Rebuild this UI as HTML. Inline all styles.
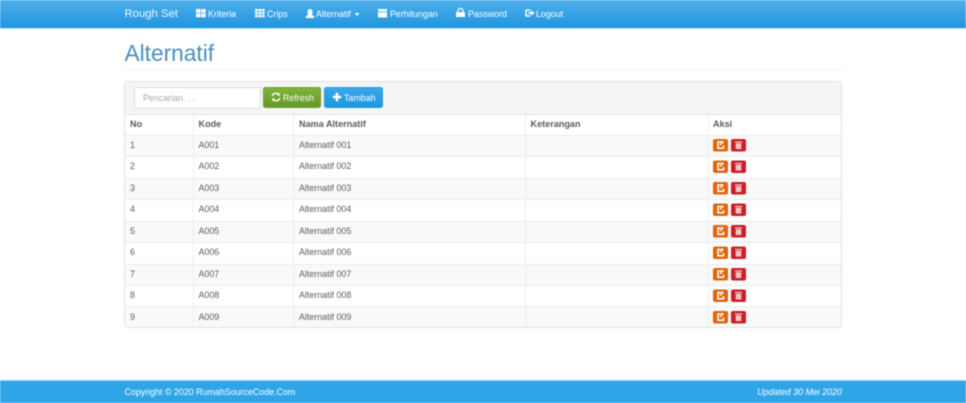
<!DOCTYPE html>
<html><head><meta charset="utf-8"><title>Alternatif</title>
<style>
html,body{margin:0;padding:0;background:#fff}
#w{position:relative;width:966px;height:403px;overflow:hidden;font-family:"Liberation Sans",sans-serif;color:#5c5c5c;filter:blur(.45px)}
#w div,#w span.a,#w svg.a{position:absolute}
.t{font-size:8.9px;line-height:12px;white-space:nowrap}
.n{color:#fff;top:8px}
.b{font-weight:bold;color:#5c5c5c;font-size:9.1px}
.btn{border-radius:2.5px}
</style></head><body><div id="w">
<div style="left:0;top:0;width:966px;height:28px;background:linear-gradient(#4fb0eb,#1f95e0);border-bottom:1px solid #c5e2f5;box-sizing:content-box"></div>
<div class="t" style="left:124.5px;top:7px;color:#eef7fd;font-size:11.3px;line-height:14px">Rough Set</div>

<svg class="a" style="left:196px;top:9px" width="10" height="9" fill="#fff"><rect width="4.5" height="3.8"/><rect x="5.2" width="4.5" height="3.8"/><rect y="4.5" width="4.5" height="3.8"/><rect x="5.2" y="4.5" width="4.5" height="3.8"/></svg>
<div class="t n" style="left:208px">Kriteria</div>
<svg class="a" style="left:255px;top:9px" width="10" height="9" fill="#fff"><rect width="2.8" height="2.3"/><rect x="3.4" width="2.8" height="2.3"/><rect x="6.8" width="2.8" height="2.3"/><rect y="3" width="2.8" height="2.3"/><rect x="3.4" y="3" width="2.8" height="2.3"/><rect x="6.8" y="3" width="2.8" height="2.3"/><rect y="6" width="2.8" height="2.3"/><rect x="3.4" y="6" width="2.8" height="2.3"/><rect x="6.8" y="6" width="2.8" height="2.3"/></svg>
<div class="t n" style="left:267px">Crips</div>
<svg class="a" style="left:305px;top:9px" width="10" height="9" fill="#fff"><ellipse cx="5" cy="3" rx="2.6" ry="3"/><path d="M0.5 9 Q1 6 4 5.5 H6 Q9 6 9.5 9 Z"/></svg>
<div class="t n" style="left:316px">Alternatif</div>
<svg class="a" style="left:354px;top:13px" width="6" height="3" fill="#fff"><path d="M0.5 0 H5.5 L3 3 Z"/></svg>
<svg class="a" style="left:378px;top:9px" width="9" height="9" fill="#fff"><path d="M0 0 H9 V2.5 H0 Z M0 3.3 H9 V8.5 H0 Z"/></svg>
<div class="t n" style="left:390px">Perhitungan</div>
<svg class="a" style="left:456px;top:8px" width="9" height="10"><path d="M2 4.5 V3 A2.5 2.5 0 0 1 7 3 V4.5" fill="none" stroke="#fff" stroke-width="1.2"/><rect y="4.2" width="9" height="4.8" fill="#fff"/></svg>
<div class="t n" style="left:468px">Password</div>
<svg class="a" style="left:525px;top:9px" width="10" height="9"><path d="M5 1 H2 Q1 1 1 2 V6 Q1 7 2 7 H5" fill="none" stroke="#fff" stroke-width="1.5"/><path d="M3.5 3 H6 V1.3 L9.6 4 L6 6.7 V5 H3.5 Z" fill="#fff"/></svg>
<div class="t n" style="left:536px">Logout</div>

<div style="left:124.5px;top:40px;font-size:22.7px;line-height:26px;color:#4a8fbd;white-space:nowrap">Alternatif</div>
<div style="left:124px;top:69px;width:718px;height:1px;background:#f0f0f0"></div>

<div style="left:124px;top:81px;width:718px;height:247px;border:1px solid #e2e2e2;border-radius:3px;box-sizing:border-box;background:#fff"></div>
<div style="left:125px;top:82px;width:716px;height:33px;background:#f5f5f5;border-bottom:1px solid #e6e6e6;box-sizing:border-box;border-radius:3px 3px 0 0"></div>
<div style="left:134px;top:87px;width:127px;height:22px;background:#fff;border:1px solid #ddd;border-radius:3px;box-sizing:border-box"></div>
<div class="t" style="left:143px;top:92px;color:#aaa">Pencarian. . .</div>
<div class="btn" style="left:263px;top:87px;width:58px;height:21px;background:linear-gradient(#80b33c,#659a28);border:1px solid #6ea22f;box-sizing:border-box"></div>
<svg class="a" style="left:271px;top:92px" width="10" height="10" fill="none" stroke="#fff" stroke-width="1.4"><path d="M1.2 4.2 A3.8 3.8 0 0 1 8 2.8"/><path d="M8.8 5.8 A3.8 3.8 0 0 1 2 7.2"/><path d="M8.8 .6 V3.6 H5.8 Z M1.2 9.4 V6.4 H4.2 Z" fill="#fff" stroke="none"/></svg>
<div class="t" style="left:283px;top:92px;color:#fff">Refresh</div>
<div class="btn" style="left:324px;top:87px;width:59px;height:21px;background:linear-gradient(#3aa8ea,#1f95e0);border:1px solid #2a9de3;box-sizing:border-box"></div>
<svg class="a" style="left:332px;top:92px" width="10" height="10" fill="#fff"><path d="M3.7 .8 H6.2 V3.7 H9.2 V6.2 H6.2 V9.2 H3.7 V6.2 H.8 V3.7 H3.7 Z"/></svg>
<div class="t" style="left:344px;top:92px;color:#fff">Tambah</div>

<div style="left:125px;top:135.5px;width:716px;height:21.5px;background:#f9f9f9"></div>
<div style="left:125px;top:178.5px;width:716px;height:21.5px;background:#f9f9f9"></div>
<div style="left:125px;top:221.5px;width:716px;height:21.5px;background:#f9f9f9"></div>
<div style="left:125px;top:264px;width:716px;height:21.5px;background:#f9f9f9"></div>
<div style="left:125px;top:307px;width:716px;height:20px;background:#f9f9f9"></div>

<div style="left:125px;top:135px;width:716px;height:1px;background:#eaeaea"></div>
<div style="left:125px;top:156px;width:716px;height:1px;background:#ececec"></div>
<div style="left:125px;top:178px;width:716px;height:1px;background:#ececec"></div>
<div style="left:125px;top:199px;width:716px;height:1px;background:#ececec"></div>
<div style="left:125px;top:221px;width:716px;height:1px;background:#ececec"></div>
<div style="left:125px;top:242px;width:716px;height:1px;background:#ececec"></div>
<div style="left:125px;top:264px;width:716px;height:1px;background:#ececec"></div>
<div style="left:125px;top:285px;width:716px;height:1px;background:#ececec"></div>
<div style="left:125px;top:306px;width:716px;height:1px;background:#ececec"></div>

<div style="left:193px;top:115px;width:1px;height:212px;background:#eee"></div>
<div style="left:293px;top:115px;width:1px;height:212px;background:#eee"></div>
<div style="left:525px;top:115px;width:1px;height:212px;background:#eee"></div>
<div style="left:708px;top:115px;width:1px;height:212px;background:#eee"></div>

<div class="t b" style="left:130px;top:118px">No</div>
<div class="t b" style="left:198.5px;top:118px">Kode</div>
<div class="t b" style="left:299px;top:118px">Nama Alternatif</div>
<div class="t b" style="left:530.5px;top:118px">Keterangan</div>
<div class="t b" style="left:713px;top:118px">Aksi</div>

<div class="t" style="left:130px;top:139px">1</div><div class="t" style="left:198.5px;top:139px">A001</div><div class="t" style="left:299px;top:139px">Alternatif 001</div>
<div class="t" style="left:130px;top:160px">2</div><div class="t" style="left:198.5px;top:160px">A002</div><div class="t" style="left:299px;top:160px">Alternatif 002</div>
<div class="t" style="left:130px;top:182px">3</div><div class="t" style="left:198.5px;top:182px">A003</div><div class="t" style="left:299px;top:182px">Alternatif 003</div>
<div class="t" style="left:130px;top:203px">4</div><div class="t" style="left:198.5px;top:203px">A004</div><div class="t" style="left:299px;top:203px">Alternatif 004</div>
<div class="t" style="left:130px;top:225px">5</div><div class="t" style="left:198.5px;top:225px">A005</div><div class="t" style="left:299px;top:225px">Alternatif 005</div>
<div class="t" style="left:130px;top:246px">6</div><div class="t" style="left:198.5px;top:246px">A006</div><div class="t" style="left:299px;top:246px">Alternatif 006</div>
<div class="t" style="left:130px;top:268px">7</div><div class="t" style="left:198.5px;top:268px">A007</div><div class="t" style="left:299px;top:268px">Alternatif 007</div>
<div class="t" style="left:130px;top:289px">8</div><div class="t" style="left:198.5px;top:289px">A008</div><div class="t" style="left:299px;top:289px">Alternatif 008</div>
<div class="t" style="left:130px;top:311px">9</div><div class="t" style="left:198.5px;top:311px">A009</div><div class="t" style="left:299px;top:311px">Alternatif 009</div>

<svg class="a" style="left:712px;top:138px" width="36" height="186">
<defs>
<g id="ac">
<rect x="1" y="1" width="15" height="12.5" rx="2" fill="#e2650a"/>
<rect x="19" y="1" width="15" height="12.5" rx="2" fill="#c9202a"/>
<path d="M10.5 4 H6 V10.2 H11.5 V7.5" fill="none" stroke="#fff" stroke-width="1.5"/>
<path d="M8 7 L11.5 3.5" stroke="#fff" stroke-width="1.3"/>
<path d="M23 3.4 H30 V4.6 H23 Z M23.7 5.2 H29.3 V11 H23.7 Z" fill="#f5c6c6"/>
</g>
</defs>
<use href="#ac" y="0"/><use href="#ac" y="21.5"/><use href="#ac" y="43"/><use href="#ac" y="64.5"/><use href="#ac" y="86"/><use href="#ac" y="107.5"/><use href="#ac" y="129"/><use href="#ac" y="150.5"/><use href="#ac" y="172"/>
</svg>

<div style="left:0;top:380px;width:966px;height:23px;background:#2fa4e7;border-top:1px solid #8fcdf2;box-sizing:border-box"></div>
<div class="t" style="left:124.5px;top:386px;color:#fff">Copyright © 2020 RumahSourceCode.Com</div>
<div class="t" style="right:124px;top:386px;color:#fff;font-style:italic">Updated 30 Mei 2020</div>
</div></body></html>
